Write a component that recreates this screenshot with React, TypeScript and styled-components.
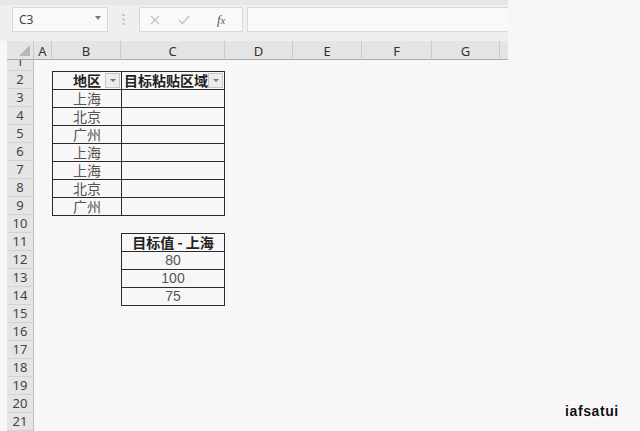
import { ReactElement } from 'react'
import styled, { createGlobalStyle } from 'styled-components'

const GlobalStyle = createGlobalStyle`
  html, body {
    margin: 0;
    padding: 0;
    background: #f7f7f7;
  }
  * {
    box-sizing: border-box;
  }
`

const CJK = `'Noto Sans CJK SC', 'Noto Sans', sans-serif`
const UI = `'Noto Sans', 'Open Sans', 'Liberation Sans', sans-serif`

const Page = styled.div`
  position: relative;
  width: 640px;
  height: 431px;
  overflow: hidden;
  background: #f7f7f7;
`

const Toolbar = styled.div`
  width: 508px;
  height: 41px;
  background: #efefef;
  border-top: 5px solid #e7e7e7;
  display: flex;
  align-items: flex-start;
  padding: 2px 0 0 12px;
`

const NameBox = styled.div`
  width: 96px;
  height: 25px;
  background: #f9f9f9;
  border: 1px solid #d9d9d9;
  display: flex;
  align-items: center;
  justify-content: space-between;
  padding: 0 6px 0 6px;
  font-family: ${UI};
  font-size: 12px;
  color: #444;
`

const Caret = styled.span`
  width: 0;
  height: 0;
  border-left: 3px solid transparent;
  border-right: 3px solid transparent;
  border-top: 4px solid #777;
  margin-top: -4px;
`

const Grip = styled.div`
  width: 31px;
  height: 25px;
  display: flex;
  align-items: center;
  justify-content: center;
`

const FxButtons = styled.div`
  width: 104px;
  height: 25px;
  background: #f9f9f9;
  border: 1px solid #d9d9d9;
  display: flex;
  align-items: center;
  padding-left: 10px;
  gap: 18px;
`

const FxLabel = styled.span`
  font-family: 'Liberation Serif', serif;
  font-style: italic;
  font-size: 13px;
  color: #555;
  margin-left: 9px;

  small {
    font-size: 10px;
  }
`

const FormulaInput = styled.div`
  flex: 1;
  height: 25px;
  margin-left: 4px;
  background: #f9f9f9;
  border: 1px solid #d9d9d9;
  border-right: none;
`

const Sheet = styled.div`
  display: grid;
  width: 508px;
  padding-left: 7px;
  grid-template-columns: 27px 18px 69px 104px 68px 69px 70px 68px 8px;
  grid-template-rows: 19px 11px repeat(20, 18px);
`

const Corner = styled.div`
  grid-column: 1;
  grid-row: 1;
  background: #e4e4e4;
  border-bottom: 1px solid #ababab;
  border-right: 1px solid #c9c9c9;
  display: flex;
  align-items: flex-end;
  justify-content: flex-end;
  padding: 0 3px 3px 0;
`

const ColHead = styled.div<{ $col: number; $last?: boolean }>`
  grid-column: ${({ $col }) => $col};
  grid-row: 1;
  background: #e4e4e4;
  border-bottom: 1px solid #ababab;
  border-right: ${({ $last }) => ($last ? 'none' : '1px solid #cbcbcb')};
  font-family: ${UI};
  font-size: 13px;
  color: #333;
  display: flex;
  align-items: center;
  justify-content: center;
  padding-top: 1px;
`

const RowHead = styled.div<{ $row: number; $short?: boolean }>`
  grid-column: 1;
  grid-row: ${({ $row }) => $row};
  background: #e5e5e5;
  border-bottom: 1px solid #d2d2d2;
  border-right: 1px solid #bdbdbd;
  font-family: ${UI};
  font-size: 13px;
  line-height: 17px;
  color: #444;
  display: flex;
  justify-content: center;
  align-items: ${({ $short }) => ($short ? 'flex-end' : 'center')};
  overflow: hidden;
`

const Table = styled.div<{ $col: string; $row: string; $width: number }>`
  grid-column: ${({ $col }) => $col};
  grid-row: ${({ $row }) => $row};
  align-self: start;
  width: ${({ $width }) => $width}px;
  border: 1px solid #2b2b2b;
  background: #f7f7f7;
  display: flex;
  flex-direction: column;
  position: relative;
  z-index: 1;
`

const TableRow = styled.div`
  display: flex;
  height: 18px;
  border-top: 1px solid #2b2b2b;

  &:first-child {
    height: 17px;
    border-top: none;
  }
`

const Cell = styled.div<{ $width: number; $divider?: boolean; $head?: boolean; $align?: string }>`
  position: relative;
  width: ${({ $width }) => $width}px;
  border-left: ${({ $divider }) => ($divider ? '1px solid #2b2b2b' : 'none')};
  font-family: ${CJK};
  font-size: 14px;
  line-height: 17px;
  font-weight: ${({ $head }) => ($head ? 700 : 400)};
  color: ${({ $head }) => ($head ? '#222' : '#555')};
  text-align: ${({ $align }) => $align || 'center'};
  padding-left: ${({ $align }) => ($align === 'left' ? '2px' : '0')};
  white-space: pre;
  overflow: hidden;
`

const NumCell = styled(Cell)`
  font-family: 'Liberation Sans', Arial, sans-serif;
  font-size: 14px;
`

const FilterButton = styled.span`
  position: absolute;
  right: 1px;
  top: 1px;
  width: 15px;
  height: 15px;
  background: #ececec;
  border: 1px solid #c6c6c6;
  display: flex;
  align-items: center;
  justify-content: center;

  &::after {
    content: '';
    border-left: 3px solid transparent;
    border-right: 3px solid transparent;
    border-top: 3px solid #777;
  }
`

const Watermark = styled.div`
  position: absolute;
  left: 565px;
  top: 403px;
  font-family: 'Liberation Sans', Arial, sans-serif;
  font-weight: 700;
  font-size: 14px;
  color: #111;
  letter-spacing: 0.6px;
  text-shadow: 0 0 2px #fff, 0 0 2px #fff, 1px 1px 1px #fff, -1px -1px 1px #fff;
`

const columns = ['A', 'B', 'C', 'D', 'E', 'F', 'G']
const regions = ['上海', '北京', '广州', '上海', '上海', '北京', '广州']
const targets = ['80', '100', '75']

const App = (): ReactElement => {
  return (
    <Page>
      <GlobalStyle />
      <Toolbar>
        <NameBox>
          C3
          <Caret />
        </NameBox>
        <Grip>
          <svg width="3" height="11" viewBox="0 0 3 11">
            <rect x="0.5" y="0" width="2" height="2" fill="#bbb" />
            <rect x="0.5" y="4.5" width="2" height="2" fill="#bbb" />
            <rect x="0.5" y="9" width="2" height="2" fill="#bbb" />
          </svg>
        </Grip>
        <FxButtons>
          <svg width="10" height="10" viewBox="0 0 10 10">
            <path d="M1 1 L9 9 M9 1 L1 9" stroke="#c3c3c3" strokeWidth="1.3" />
          </svg>
          <svg width="12" height="10" viewBox="0 0 12 10">
            <path d="M1 5 L4.5 8.5 L11 1" stroke="#c3c3c3" strokeWidth="1.4" fill="none" />
          </svg>
          <FxLabel>
            f<small>x</small>
          </FxLabel>
        </FxButtons>
        <FormulaInput />
      </Toolbar>

      <Sheet>
        <Corner>
          <svg width="11" height="11" viewBox="0 0 11 11">
            <polygon points="11,0 11,11 0,11" fill="#b7b7b7" />
          </svg>
        </Corner>
        {columns.map((c, i) => (
          <ColHead key={c} $col={i + 2}>
            {c}
          </ColHead>
        ))}
        <ColHead $col={9} $last />
        {Array.from({ length: 21 }, (_, i) => (
          <RowHead key={i} $row={i + 2} $short={i === 0}>
            {i + 1}
          </RowHead>
        ))}

        <Table $col="3 / 5" $row="3 / 11" $width={173}>
          <TableRow>
            <Cell $width={68} $head>
              地区
              <FilterButton />
            </Cell>
            <Cell $width={103} $divider $head $align="left">
              目标粘贴区域
              <FilterButton />
            </Cell>
          </TableRow>
          {regions.map((r, i) => (
            <TableRow key={i}>
              <Cell $width={68}>{r}</Cell>
              <Cell $width={103} $divider />
            </TableRow>
          ))}
        </Table>

        <Table $col="4 / 5" $row="12 / 16" $width={104}>
          <TableRow>
            <Cell $width={102} $head>
              {'目标值 - 上海'}
            </Cell>
          </TableRow>
          {targets.map((t) => (
            <TableRow key={t}>
              <NumCell $width={102}>{t}</NumCell>
            </TableRow>
          ))}
        </Table>
      </Sheet>

      <Watermark>iafsatui</Watermark>
    </Page>
  )
}

export default App
